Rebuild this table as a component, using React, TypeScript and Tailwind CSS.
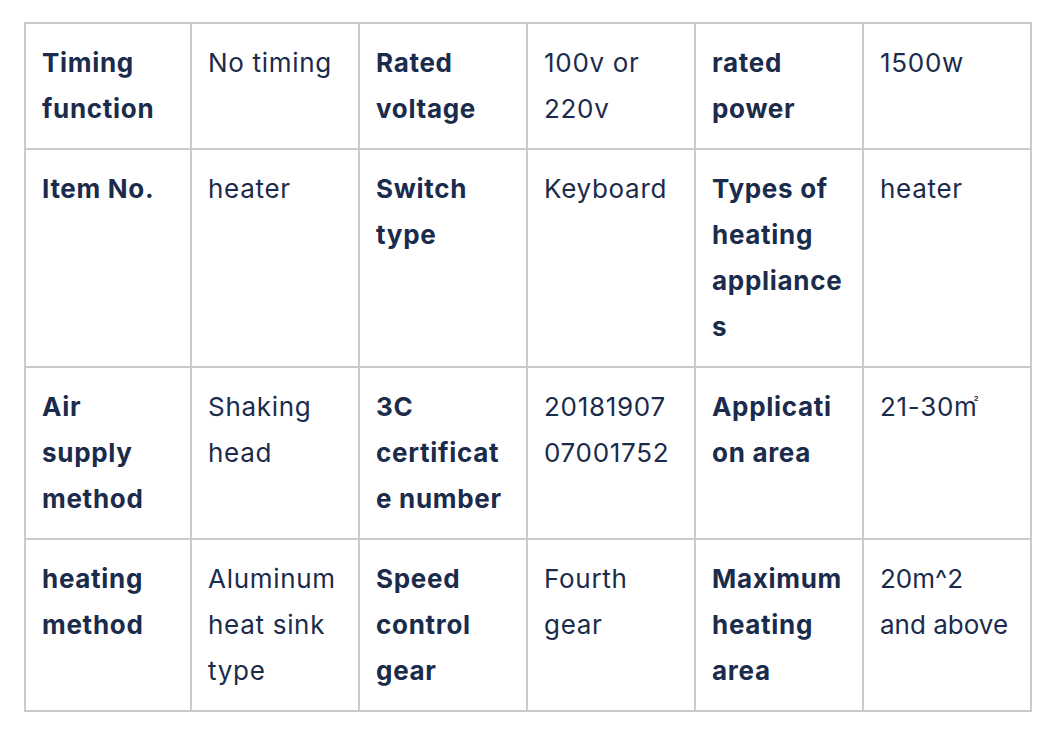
type Cell = [string, React.ReactNode, string?];

const rows: Cell[][] = [
  [
    ["Timing function", "No timing"],
    ["Rated voltage", "100v or 220v"],
    ["rated power", "1500w"],
  ],
  [
    ["Item No.", "heater"],
    ["Switch type", "Keyboard"],
    ["Types of heating appliances", "heater"],
  ],
  [
    ["Air supply method", "Shaking head"],
    ["3C certificate number", "2018190707001752"],
    [
      "Application area",
      <>
        21-30m
        <span className="relative -top-[10px] -ml-[4px] text-[12px]">²</span>
      </>,
    ],
  ],
  [
    ["heating method", "Aluminum heat sink type"],
    ["Speed control gear", "Fourth gear"],
    ["Maximum heating area", "20m^2 and above", "tracking-[0px]"],
  ],
];

export default function App() {
  return (
    <div className="min-h-screen bg-white pt-[22px] pl-[24px]" style={{ fontFamily: "Inter, 'Noto Sans', sans-serif" }}>
      <table className="w-[1008px] table-fixed border-collapse text-[26px] leading-[46px] tracking-[0.7px] text-[#1b2b4c]">
        <colgroup>
          <col className="w-[166px]" />
          <col className="w-[168px]" />
          <col className="w-[168px]" />
          <col className="w-[168px]" />
          <col className="w-[168px]" />
          <col className="w-[168px]" />
        </colgroup>
        <tbody>
          {rows.map((row, i) => (
            <tr key={i}>
              {row.flatMap(([label, value, extra], j) => [
                <td key={`l${j}`} className="border-2 border-[#c9c9cc] p-4 align-top font-bold break-words">
                  {label}
                </td>,
                <td key={`v${j}`} className={`border-2 border-[#c9c9cc] p-4 align-top break-words ${extra ?? ""}`}>
                  {value}
                </td>,
              ])}
            </tr>
          ))}
        </tbody>
      </table>
    </div>
  );
}
